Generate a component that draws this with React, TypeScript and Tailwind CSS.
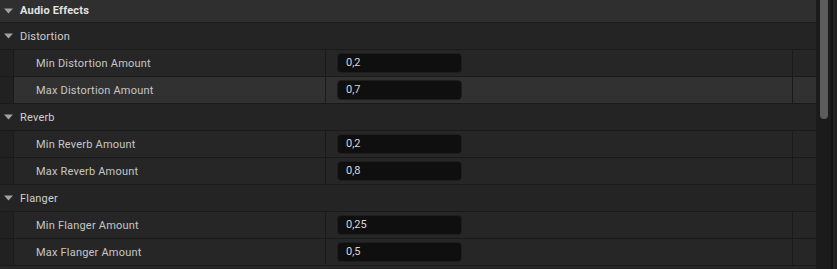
import React from 'react';

type Prop = { label: string; value: string; hover?: boolean };
type Section = { title: string; props: Prop[] };

const sections: Section[] = [
  {
    title: 'Distortion',
    props: [
      { label: 'Min Distortion Amount', value: '0,2' },
      { label: 'Max Distortion Amount', value: '0,7', hover: true },
    ],
  },
  {
    title: 'Reverb',
    props: [
      { label: 'Min Reverb Amount', value: '0,2' },
      { label: 'Max Reverb Amount', value: '0,8' },
    ],
  },
  {
    title: 'Flanger',
    props: [
      { label: 'Min Flanger Amount', value: '0,25' },
      { label: 'Max Flanger Amount', value: '0,5' },
    ],
  },
];

const Arrow = () => (
  <svg width="9" height="6" viewBox="0 0 9 6" className="shrink-0">
    <path d="M0 0.5 L9 0.5 L4.5 5.5 Z" fill="#a2a2a2" />
  </svg>
);

const PropRow = ({ p }: { p: Prop }) => (
  <div className="flex h-[27px] shrink-0 border-b border-[#1a1a1a]">
    <div className="w-[14px] shrink-0 bg-[#212121] border-r border-[#1a1a1a]" />
    <div
      className={
        'flex w-[312px] shrink-0 items-center pl-[22px] pt-[2px] border-r border-[#1a1a1a] ' +
        (p.hover ? 'bg-[#313131]' : 'bg-[#262626]')
      }
    >
      <span className="text-[11px] tracking-[0.2px] text-[#c6c6c6]">{p.label}</span>
    </div>
    <div
      className={
        'flex flex-1 items-center pl-[11px] border-r border-[#1a1a1a] ' +
        (p.hover ? 'bg-[#313131]' : 'bg-[#262626]')
      }
    >
      <div className="flex h-[20px] w-[125px] items-center rounded-[4px] border border-[#1e1e1e] bg-[#0f0f0f] pl-[8px] pt-[1px]">
        <span className="text-[11px] text-[#d8d8d8]">{p.value}</span>
      </div>
    </div>
    <div className={'w-[23px] shrink-0 ' + (p.hover ? 'bg-[#313131]' : 'bg-[#262626]')} />
  </div>
);

export default function App() {
  return (
    <div
      className="flex h-[269px] w-[837px] overflow-hidden bg-[#1c1c1c]"
      style={{ fontFamily: 'Roboto, "Noto Sans", sans-serif' }}
    >
      <div className="flex w-[816px] shrink-0 flex-col">
        {/* Category header */}
        <div className="flex h-[23px] shrink-0 items-center gap-[7px] border-b border-[#1a1a1a] bg-[#2f2f2f] pl-[4px]">
          <Arrow />
          <span className="text-[11px] font-bold tracking-[0.2px] text-[#e2e2e2]">Audio Effects</span>
        </div>

        {sections.map((s) => (
          <React.Fragment key={s.title}>
            <div className="flex h-[27px] shrink-0 items-center gap-[7px] border-b border-[#1a1a1a] bg-[#242424] pl-[4px]">
              <Arrow />
              <span className="pt-[2px] text-[11px] tracking-[0.2px] text-[#cfcfcf]">{s.title}</span>
            </div>
            {s.props.map((p) => (
              <PropRow key={p.label} p={p} />
            ))}
          </React.Fragment>
        ))}
        <div className="h-[27px] shrink-0 bg-[#262626]" />
      </div>

      {/* Scrollbar */}
      <div className="flex w-[21px] shrink-0 bg-[#1b1b1b]">
        <div className="w-[4px]" />
        <div className="h-[119px] w-[8px] rounded-b-[4px] bg-[#5c5c5c]" />
        <div className="w-[3px]" />
        <div className="w-[2px] bg-[#141414]" />
        <div className="flex-1 bg-[#222222]" />
      </div>
    </div>
  );
}
